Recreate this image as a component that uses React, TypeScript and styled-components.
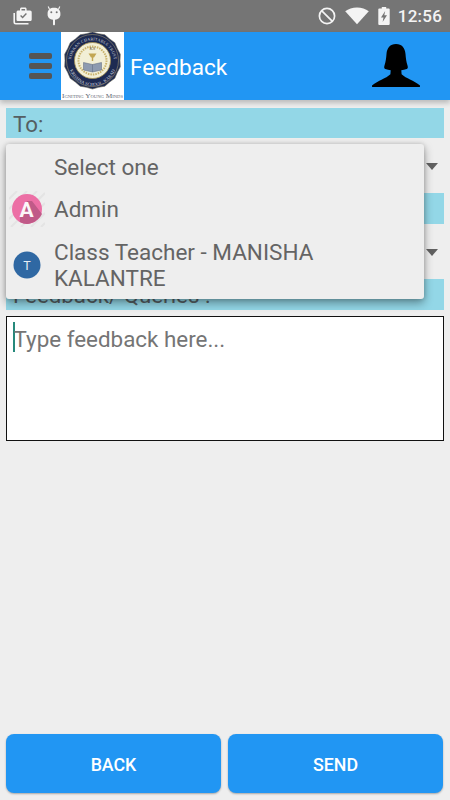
import React from 'react'
import styled, { createGlobalStyle } from 'styled-components'

const GlobalStyle = createGlobalStyle`
    html, body {
        margin: 0;
        padding: 0;
        background: #eeeeee;
    }
    * {
        box-sizing: border-box;
    }
`;

const Screen = styled.div`
    width: 450px;
    height: 800px;
    background: #eeeeee;
    display: flex;
    flex-direction: column;
    font-family: Roboto, "Liberation Sans", sans-serif;
    overflow: hidden;
`;

const StatusBar = styled.div`
    height: 32px;
    flex: none;
    background: #757575;
    display: flex;
    align-items: center;
    padding: 0 8px 0 13px;
    color: #f4f4f4;
`;

const StatusLeft = styled.div`
    display: flex;
    align-items: center;
    gap: 13px;
    flex: 1;
`;

const StatusRight = styled.div`
    display: flex;
    align-items: center;
    gap: 9px;
`;

const Clock = styled.span`
    font-size: 17px;
    font-weight: 500;
    letter-spacing: 0.2px;
    margin-left: -1px;
`;

const Header = styled.header`
    height: 68px;
    flex: none;
    background: #2196f3;
    display: flex;
    align-items: center;
    padding-left: 29px;
    box-shadow: 0 3px 5px rgba(0, 0, 0, 0.22);
    position: relative;
    z-index: 2;
`;

const MenuIcon = styled.div`
    width: 23px;
    display: flex;
    flex-direction: column;
    gap: 3.5px;
    margin-right: 9px;
`;

const MenuBar = styled.span`
    height: 6.5px;
    border-radius: 2px;
    background: #555555;
`;

const Logo = styled.div`
    width: 63px;
    height: 68px;
    background: #ffffff;
    flex: none;
`;

const Title = styled.h1`
    margin: 3px 0 0 6px;
    font-size: 22.6px;
    font-weight: 400;
    color: #ffffff;
    flex: 1;
`;

const Avatar = styled.div`
    width: 48px;
    height: 47px;
    margin: 3px 30px 0 0;
`;

const Content = styled.main`
    flex: 1;
    position: relative;
    display: flex;
    flex-direction: column;
    padding: 8px 6px 7px;
`;

const LabelBar = styled.div<{ $height: number }>`
    height: ${({ $height }) => $height}px;
    flex: none;
    background: #93d7e7;
    color: #555f63;
    font-size: 22.3px;
    line-height: 33px;
    padding-left: 7px;
    overflow: hidden;
`;

const SpinnerRow = styled.div`
    height: 55px;
    flex: none;
    display: flex;
    justify-content: flex-end;
    align-items: center;
    padding-right: 6px;
`;

const Arrow = styled.span`
    width: 0;
    height: 0;
    border-left: 6.5px solid transparent;
    border-right: 6.5px solid transparent;
    border-top: 7px solid #616161;
    margin-top: 2px;
`;

const FeedbackInput = styled.div`
    height: 125px;
    flex: none;
    margin-top: 6px;
    background: #ffffff;
    border: 1px solid #111111;
    padding: 5px 0 0 6px;
    font-size: 22.4px;
    line-height: 34px;
    color: #757575;
    display: flex;
    align-items: flex-start;
`;

const Caret = styled.span`
    width: 1.5px;
    height: 30px;
    background: #26897b;
    margin-right: -1px;
    flex: none;
`;

const Footer = styled.div`
    margin-top: auto;
    display: grid;
    grid-template-columns: 215px 215px;
    gap: 7px;
`;

const ActionButton = styled.button`
    height: 59px;
    border: none;
    border-radius: 8px;
    background: #2196f3;
    color: #ffffff;
    font-family: inherit;
    font-size: 17.8px;
    font-weight: 500;
    padding-top: 3px;
    box-shadow: 0 1px 2px rgba(0, 0, 0, 0.3);
`;

const Dropdown = styled.ul`
    position: absolute;
    top: 44px;
    left: 6px;
    width: 418px;
    height: 155px;
    margin: 0;
    padding: 2px 0 0;
    list-style: none;
    background: #eeeeee;
    border-radius: 3px;
    box-shadow: 0 4px 10px rgba(0, 0, 0, 0.38), 0 0 4px rgba(0, 0, 0, 0.14);
    z-index: 3;
`;

const Option = styled.li<{ $height: number }>`
    height: ${({ $height }) => $height}px;
    display: flex;
    align-items: center;
    color: #646464;
    font-size: 22.5px;
    line-height: 26px;
`;

const OptionIcon = styled.div`
    width: 42px;
    margin-right: 6px;
    flex: none;
    display: flex;
    justify-content: center;
`;

const OptionText = styled.span`
    width: 310px;
`;

const WorkIcon = () => (
    <svg width="20" height="18" viewBox="0 0 20 18">
        <path fill="#f4f4f4" d="M7 3.500V2.200C7 1.300 7.700.6 8.600.6h3.400c.9 0 1.600.7 1.600 1.600v1.300h3.400c1 0 1.700.8 1.700 1.700v7.200c0 1-.8 1.700-1.700 1.700H5.200c-1 0-1.700-.8-1.700-1.700V5.200c0-1 .8-1.700 1.700-1.700H7zm1.500 0h3.600V2.100H8.500v1.400z" />
        <path fill="none" stroke="#757575" strokeWidth="1.4" d="M7.600 8.400l2 2 3.800-4" />
        <path fill="none" stroke="#f4f4f4" strokeWidth="1.6" d="M1.200 6v9c0 1 .7 1.700 1.700 1.700h12.600" />
    </svg>
);

const AndroidIcon = () => (
    <svg width="16" height="20" viewBox="0 0 16 20">
        <path fill="#f4f4f4" d="M1.600 7.400C1.600 3.800 4.400 1.800 8 1.800s6.400 2 6.400 5.600v1.400c0 2.600-2.400 4.800-5.400 5v4.400c0 .6-.4 1-1 1s-1-.4-1-1v-4.400c-3-.2-5.400-2.400-5.400-5V7.400z" />
        <path fill="none" stroke="#f4f4f4" strokeWidth="1.1" d="M3.600 3.400L2.200.6M12.400 3.400l1.400-2.800" />
        <circle cx="5.300" cy="6.200" r="1" fill="#757575" />
        <circle cx="10.700" cy="6.200" r="1" fill="#757575" />
    </svg>
);

const BlockedIcon = () => (
    <svg width="18" height="18" viewBox="0 0 18 18">
        <circle cx="9" cy="9" r="7.600" fill="none" stroke="#f4f4f4" strokeWidth="1.700" />
        <path stroke="#f4f4f4" strokeWidth="1.700" d="M3.600 3.600l10.800 10.800" />
    </svg>
);

const WifiIcon = () => (
    <svg width="24" height="18" viewBox="0 0 24 18">
        <path fill="#f4f4f4" d="M12 17.200L.2 4.200C3.400 1.800 7.400.4 12 .4s8.600 1.400 11.800 3.800L12 17.200z" />
    </svg>
);

const BatteryIcon = () => (
    <svg width="12" height="18" viewBox="0 0 12 18">
        <path fill="#f4f4f4" d="M3.800 0h4.400v1.400h2.600c.5 0 .9.400.9.900V17.100c0 .5-.4.900-.9.900H1.200c-.5 0-.9-.4-.9-.9V2.300c0-.5.400-.9.900-.9h2.600V0z" />
        <path fill="#757575" d="M7.200 4L3 10.400h2.500L4.600 15l4.400-6.800H6.300L7.200 4z" />
    </svg>
);

// school crest, reduced to the rings you can make out at this size
const LogoCrest = () => {
    const points = Array.from({ length: 28 }, (_, i) => {
        const angle = (i / 28) * Math.PI * 2;
        const radius = i % 2 ? 28.5 : 27.5;
        return `${31.5 + radius * Math.cos(angle)},${28.5 + radius * Math.sin(angle)}`;
    }).join(' ');
    return (
        <svg width="63" height="68" viewBox="0 0 63 68">
            <polygon points={points} fill="#1d2a52" stroke="#6d6a58" strokeWidth="0.6" />
            <circle cx="31.5" cy="28.5" r="26" fill="none" stroke="#b9a877" strokeWidth="0.5" />
            <path id="crestTop" fill="none" d="M10 30a21.500 21.500 0 0 1 43 0" />
            <text fontFamily="Liberation Serif, serif" fontSize="4.200" fill="#cfd3da" letterSpacing="0.1">
                <textPath href="#crestTop" startOffset="50%" textAnchor="middle">KONKAN CHARITABLE TRUST</textPath>
            </text>
            <path id="crestBottom" fill="none" d="M7.500 30a24 24 0 0 0 48 0" />
            <text fontFamily="Liberation Serif, serif" fontSize="4.600" fill="#cfd3da">
                <textPath href="#crestBottom" startOffset="50%" textAnchor="middle">KRISHNA SCHOOL, KARAD</textPath>
            </text>
            <circle cx="31.5" cy="28.5" r="18" fill="#f2efd6" stroke="#a8924f" strokeWidth="0.8" />
            <circle cx="31.5" cy="28.5" r="14" fill="none" stroke="#c9b26a" strokeWidth="2" strokeDasharray="1.500 1" />
            <text x="31.500" y="18" fontFamily="Liberation Serif, serif" fontSize="4.500" fill="#5c4d28" textAnchor="middle">KS</text>
            <path fill="#c2a653" d="M27.500 21.500h8l-2.500 4h-3z" />
            <rect x="30.800" y="25" width="1.400" height="4" fill="#c2a653" />
            <path fill="#8e9bb0" stroke="#59657c" strokeWidth="0.5" d="M22.500 30.500l9 2 9-2v7.500l-9 2-9-2z" />
            <path stroke="#59657c" strokeWidth="0.5" d="M31.500 32.500v7.500" />
            <text x="31.500" y="66" fontFamily="Liberation Serif, serif" fontSize="6.300" fill="#5f6672" textAnchor="middle" fontVariant="small-caps" textLength="61" lengthAdjust="spacingAndGlyphs">Igniting Young Minds</text>
        </svg>
    );
};

const AvatarIcon = () => (
    <svg width="48" height="47" viewBox="0 0 48 47">
        <path fill="#000000" d="M24 0c6 0 9 4 9.500 10 .3 4 .8 8 2 11.500.6 2 .4 3-.8 3.500-1.800.7-3.700 1.100-5.400 1.300l.3 4c2.500 2.200 5.300 3.700 8.400 5.300 3.500 1.800 7 3.700 10 5.900 1.200.9 0 1.500-1 1.500H1c-1 0-2.200-.6-1-1.500 3-2.200 6.500-4.100 10-5.900 3.100-1.600 5.900-3.100 8.400-5.300l.3-4c-1.700-.2-3.600-.6-5.400-1.300-1.200-.5-1.400-1.500-.8-3.500 1.200-3.500 1.700-7.500 2-11.500C15 4 18 0 24 0z" />
    </svg>
);

const AdminAvatar = () => (
    <svg width="36" height="36" viewBox="0 0 36 36">
        <path stroke="#e4e4e4" strokeWidth="2" d="M0 8L8 0M0 18L18 0M0 28L28 0M2 36L36 2M12 36L36 12M22 36L36 22M32 36l4-4" />
        <circle cx="18" cy="18" r="15" fill="#ec6fa5" />
        <path fill="#c05a88" d="M28.600 28.600a15 15 0 0 1-17.800 2.500L11 27l7-17 5 0 10 13a15 15 0 0 1-4.400 5.600z" />
        <text x="17.500" y="25.500" fontFamily="Roboto, sans-serif" fontSize="21" fontWeight="700" fill="#fbf6f9" textAnchor="middle">A</text>
    </svg>
);

const TeacherAvatar = () => (
    <svg width="28" height="28" viewBox="0 0 28 28">
        <circle cx="14" cy="14" r="13.500" fill="#2f68a3" />
        <text x="14" y="18.500" fontFamily="Roboto, sans-serif" fontSize="12.500" fill="#e6eef6" textAnchor="middle">T</text>
    </svg>
);

const App = (): JSX.Element => {
    return (
        <Screen>
            <GlobalStyle />
            <StatusBar>
                <StatusLeft>
                    <WorkIcon />
                    <AndroidIcon />
                </StatusLeft>
                <StatusRight>
                    <BlockedIcon />
                    <WifiIcon />
                    <BatteryIcon />
                    <Clock>12:56</Clock>
                </StatusRight>
            </StatusBar>
            <Header>
                <MenuIcon>
                    <MenuBar />
                    <MenuBar />
                    <MenuBar />
                </MenuIcon>
                <Logo>
                    <LogoCrest />
                </Logo>
                <Title>Feedback</Title>
                <Avatar>
                    <AvatarIcon />
                </Avatar>
            </Header>
            <Content>
                <LabelBar $height={30}>To:</LabelBar>
                <SpinnerRow>
                    <Arrow />
                </SpinnerRow>
                <LabelBar $height={31} />
                <SpinnerRow>
                    <Arrow />
                </SpinnerRow>
                <LabelBar $height={31}>Feedback/ Queries :</LabelBar>
                <FeedbackInput>
                    <Caret />
                    Type feedback here...
                </FeedbackInput>
                <Footer>
                    <ActionButton>BACK</ActionButton>
                    <ActionButton>SEND</ActionButton>
                </Footer>
                <Dropdown>
                    <Option $height={42}>
                        <OptionIcon />
                        <OptionText>Select one</OptionText>
                    </Option>
                    <Option $height={42}>
                        <OptionIcon>
                            <AdminAvatar />
                        </OptionIcon>
                        <OptionText>Admin</OptionText>
                    </Option>
                    <Option $height={69}>
                        <OptionIcon>
                            <TeacherAvatar />
                        </OptionIcon>
                        <OptionText>Class Teacher - MANISHA KALANTRE</OptionText>
                    </Option>
                </Dropdown>
            </Content>
        </Screen>
    );
};

export default App
